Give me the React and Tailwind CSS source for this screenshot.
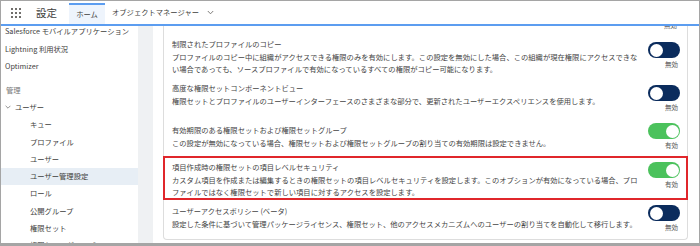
import React from 'react';

const Toggle = ({ on, className }) => (
    <div className={`flex flex-col items-end ${className}`}>
        <div className={`w-[32px] h-[16px] rounded-full flex items-center px-[1.5px] ${on ? 'bg-[#4bc25c] justify-end' : 'bg-[#0b2c5d] justify-start'}`}>
            <div className="w-[13px] h-[13px] rounded-full bg-white" />
        </div>
        <div className="mt-[2px] pr-[2px] text-[6.5px] leading-[8px] text-[#555]">{on ? '有効' : '無効'}</div>
    </div>
);

const rows = [
    {
        title: '制限されたプロファイルのコピー',
        lines: [
            'プロファイルのコピー中に組織がアクセスできる権限のみを有効にします。この設定を無効にした場合、この組織が現在権限にアクセスできな',
            'い場合であっても、ソースプロファイルで有効になっているすべての権限がコピー可能になります。',
        ],
        on: false,
        rowClass: 'h-[44px] mt-[9px]',
        toggleClass: 'mt-[4px]',
    },
    {
        title: '高度な権限セットコンポーネントビュー',
        lines: ['権限セットとプロファイルのユーザーインターフェースのさまざまな部分で、更新されたユーザーエクスペリエンスを使用します。'],
        on: false,
        rowClass: 'h-[42px]',
        toggleClass: 'mt-[3px]',
    },
    {
        title: '有効期限のある権限セットおよび権限セットグループ',
        lines: ['この設定が無効になっている場合、権限セットおよび権限セットグループの割り当ての有効期限は設定できません。'],
        on: true,
        rowClass: 'h-[32px]',
        toggleClass: '-mt-[1px]',
    },
];

const sideItems = [
    { label: 'キュー' },
    { label: 'プロファイル' },
    { label: 'ユーザー' },
    { label: 'ユーザー管理設定', active: true },
    { label: 'ロール' },
    { label: '公開グループ' },
    { label: '権限セット' },
    { label: '権限セットグループ' },
];

const RowText = ({ title, lines }) => (
    <div className="flex-1 text-[7.3px] leading-[12.5px] text-[#444] whitespace-nowrap">
        <div>{title}</div>
        {lines.map((l) => (
            <div key={l}>{l}</div>
        ))}
    </div>
);

export default function App() {
    return (
        <div className="w-[700px] h-[246px] overflow-hidden bg-white border border-[#a5a5a5] border-b-[3px] flex flex-col font-['Noto_Sans_CJK_JP','Noto_Sans',sans-serif]">
            {/* header */}
            <div className="h-[25px] shrink-0 flex items-center border-b-2 border-[#5c9df0]">
                <div className="ml-[10px] grid grid-cols-3 gap-[2px]">
                    {Array.from({ length: 9 }).map((_, i) => (
                        <div key={i} className="w-[2px] h-[2px] bg-[#706e6b]" />
                    ))}
                </div>
                <div className="ml-[15px] text-[10.5px] text-[#3e3e3c]">設定</div>
                <div className="ml-[12px] self-end h-[21px] w-[36px] border-t-2 border-[#5c9df0] bg-[#eef4fc] flex items-center justify-center text-[7.3px] text-[#3e3e3c]">
                    ホーム
                </div>
                <div className="ml-[7px] text-[7.3px] text-[#3e3e3c]">オブジェクトマネージャー</div>
                <svg className="ml-[8px]" width="7" height="5" viewBox="0 0 7 5">
                    <path d="M0.8 1 L3.5 3.8 L6.2 1" fill="none" stroke="#706e6b" strokeWidth="0.9" />
                </svg>
            </div>

            {/* main */}
            <div className="flex flex-1 overflow-hidden">
                <div className="w-[137px] shrink-0 text-[7.3px] text-[#3e3e3c]">
                    <div className="-mt-[3px]">
                        <div className="h-[17.5px] flex items-center pl-[4px] whitespace-nowrap">Salesforce モバイルアプリケーション</div>
                        <div className="h-[17.5px] flex items-center pl-[4px]">Lightning 利用状況</div>
                        <div className="h-[17.5px] flex items-center pl-[4px]">Optimizer</div>
                        <div className="mt-[6px] h-[17.3px] flex items-center pl-[5px] text-[#777]">管理</div>
                        <div className="h-[17.3px] flex items-center pl-[4px]">
                            <svg width="6" height="4" viewBox="0 0 6 4">
                                <path d="M0.6 0.8 L3 3.2 L5.4 0.8" fill="none" stroke="#777" strokeWidth="0.8" />
                            </svg>
                            <span className="ml-[4px]">ユーザー</span>
                        </div>
                        {sideItems.map((it) => (
                            <div
                                key={it.label}
                                className={`h-[17.3px] flex items-center pl-[29px] ${it.active ? 'bg-[#e7eef5]' : ''}`}
                            >
                                {it.label}
                            </div>
                        ))}
                    </div>
                </div>
                <div className="w-[15px] shrink-0 bg-[#eff1f3]" />
                <div className="flex-1 pl-[10px] pr-[11px] overflow-hidden">
                    <div className="border-x border-b border-[#dddddd] rounded-b-[4px] flex flex-col">
                        <div className="-mt-[5px] flex justify-end pr-[8px]">
                            <div className="pr-[2px] text-[6.5px] leading-[8px] text-[#555]">無効</div>
                        </div>
                        {rows.map((r) => (
                            <div key={r.title} className={`flex items-start pl-[8px] pr-[7px] ${r.rowClass}`}>
                                <RowText title={r.title} lines={r.lines} />
                                <Toggle on={r.on} className={r.toggleClass} />
                            </div>
                        ))}
                        <div className="-mx-px h-[44px] border-2 border-[#e0262b] flex items-start pl-[7px] pr-[6px] pt-[3px]">
                            <RowText
                                title="項目作成時の権限セットの項目レベルセキュリティ"
                                lines={[
                                    'カスタム項目を作成または編集するときの権限セットの項目レベルセキュリティを設定します。このオプションが有効になっている場合、プロ',
                                    'ファイルではなく権限セットで新しい項目に対するアクセスを設定します。',
                                ]}
                            />
                            <Toggle on className="mt-[1px]" />
                        </div>
                        <div className="mt-[5px] h-[34px] flex items-start pl-[8px] pr-[7px]">
                            <RowText
                                title="ユーザーアクセスポリシー (ベータ)"
                                lines={['設定した条件に基づいて管理パッケージライセンス、権限セット、他のアクセスメカニズムへのユーザーの割り当てを自動化して移行します。']}
                            />
                            <Toggle on={false} />
                        </div>
                    </div>
                </div>
            </div>
        </div>
    );
}
